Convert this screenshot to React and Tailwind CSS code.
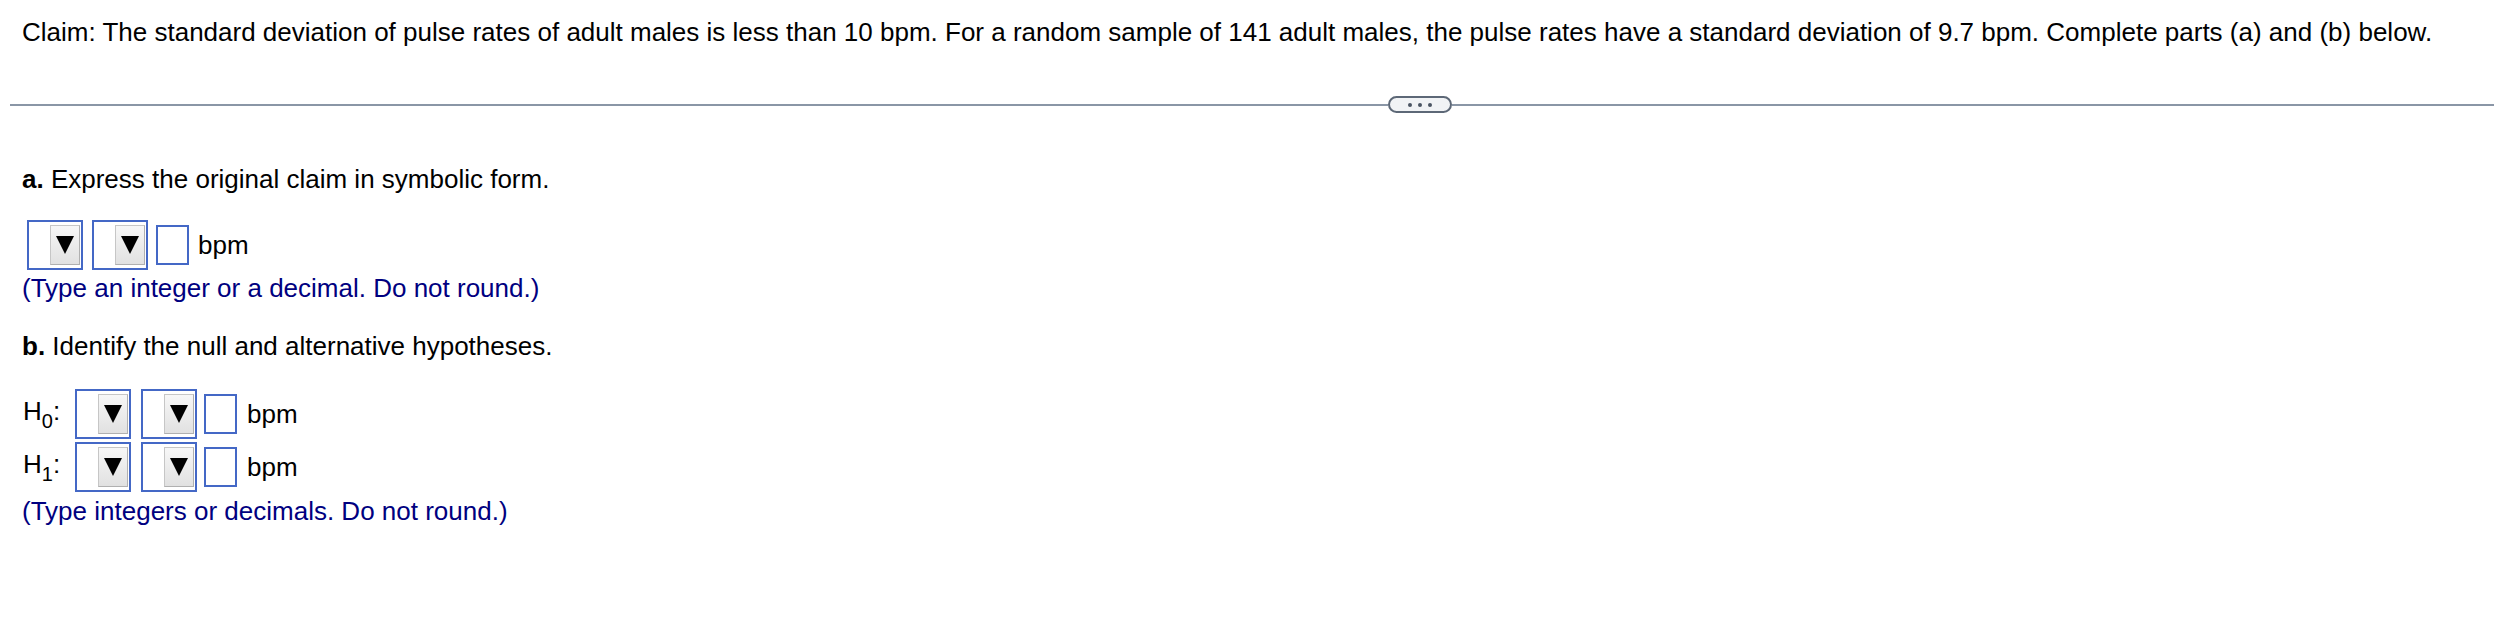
import React from 'react';

const SelectBox = () => (
  <div className="flex h-[50px] w-[56px] items-center justify-end border-2 border-[#4468c6] bg-white pr-[1px]">
    <div className="flex h-[40px] w-[30px] items-center justify-center border border-[#c6c6c6] border-b-[#b0b0b0] border-r-[#b0b0b0] bg-gradient-to-b from-[#f7f7f7] to-[#e1e1e1]">
      <svg width="18" height="18" viewBox="0 0 18 18">
        <polygon points="0,0 18,0 9,18" fill="#000" />
      </svg>
    </div>
  </div>
);

const TextBox = () => <div className="h-[40px] w-[33px] border-2 border-[#4468c6] bg-white" />;

const AnswerRow = () => (
  <div className="flex h-[50px] items-center">
    <SelectBox />
    <div className="ml-[9px]">
      <SelectBox />
    </div>
    <div className="ml-[8px]">
      <TextBox />
    </div>
    <span className="ml-[9px]">bpm</span>
  </div>
);

const Hyp = ({ sub }) => (
  <div className="flex h-[50px] items-center">
    <span className="w-[52px] whitespace-nowrap">
      H<span className="align-[-8px] text-[20px] leading-none">{sub}</span>:
    </span>
    <SelectBox />
    <div className="ml-[10px]">
      <SelectBox />
    </div>
    <div className="ml-[7px]">
      <TextBox />
    </div>
    <span className="ml-[10px]">bpm</span>
  </div>
);

export default function App() {
  return (
    <div className="h-[626px] w-full overflow-hidden bg-white text-[26px] leading-[29px] text-black [font-family:'Liberation_Sans',Arial,sans-serif]">
      <p className="whitespace-nowrap pl-[22px] pt-[18px]">
        Claim: The standard deviation of pulse rates of adult males is less than 10 bpm. For a random sample of 141 adult males, the pulse rates have a standard deviation of 9.7 bpm. Complete parts (a) and (b) below.
      </p>

      <div className="mt-[49px] flex h-[17px] items-center pl-[10px]">
        <div className="h-[2px] w-[1378px] bg-[#8a96a6]" />
        <div className="flex h-[17px] w-[64px] items-center justify-center gap-[6px] rounded-full border-2 border-[#5d6877] bg-[#f1f3f5]">
          <span className="h-[4px] w-[4px] rounded-full bg-[#4b5563]" />
          <span className="h-[4px] w-[4px] rounded-full bg-[#4b5563]" />
          <span className="h-[4px] w-[4px] rounded-full bg-[#4b5563]" />
        </div>
        <div className="h-[2px] flex-1 bg-[#8a96a6]" />
      </div>

      <div className="pl-[22px]">
        <p className="mt-[52px]">
          <span className="font-bold">a.</span> Express the original claim in symbolic form.
        </p>
        <div className="mt-[26px] pl-[5px]">
          <AnswerRow />
        </div>
        <p className="mt-[4px] text-[#000080]">(Type an integer or a decimal. Do not round.)</p>

        <p className="mt-[29px]">
          <span className="font-bold">b.</span> Identify the null and alternative hypotheses.
        </p>
        <div className="mt-[28px] flex flex-col gap-[3px] pl-[1px]">
          <Hyp sub="0" />
          <Hyp sub="1" />
        </div>
        <p className="mt-[5px] text-[#000080]">(Type integers or decimals. Do not round.)</p>
      </div>
    </div>
  );
}
